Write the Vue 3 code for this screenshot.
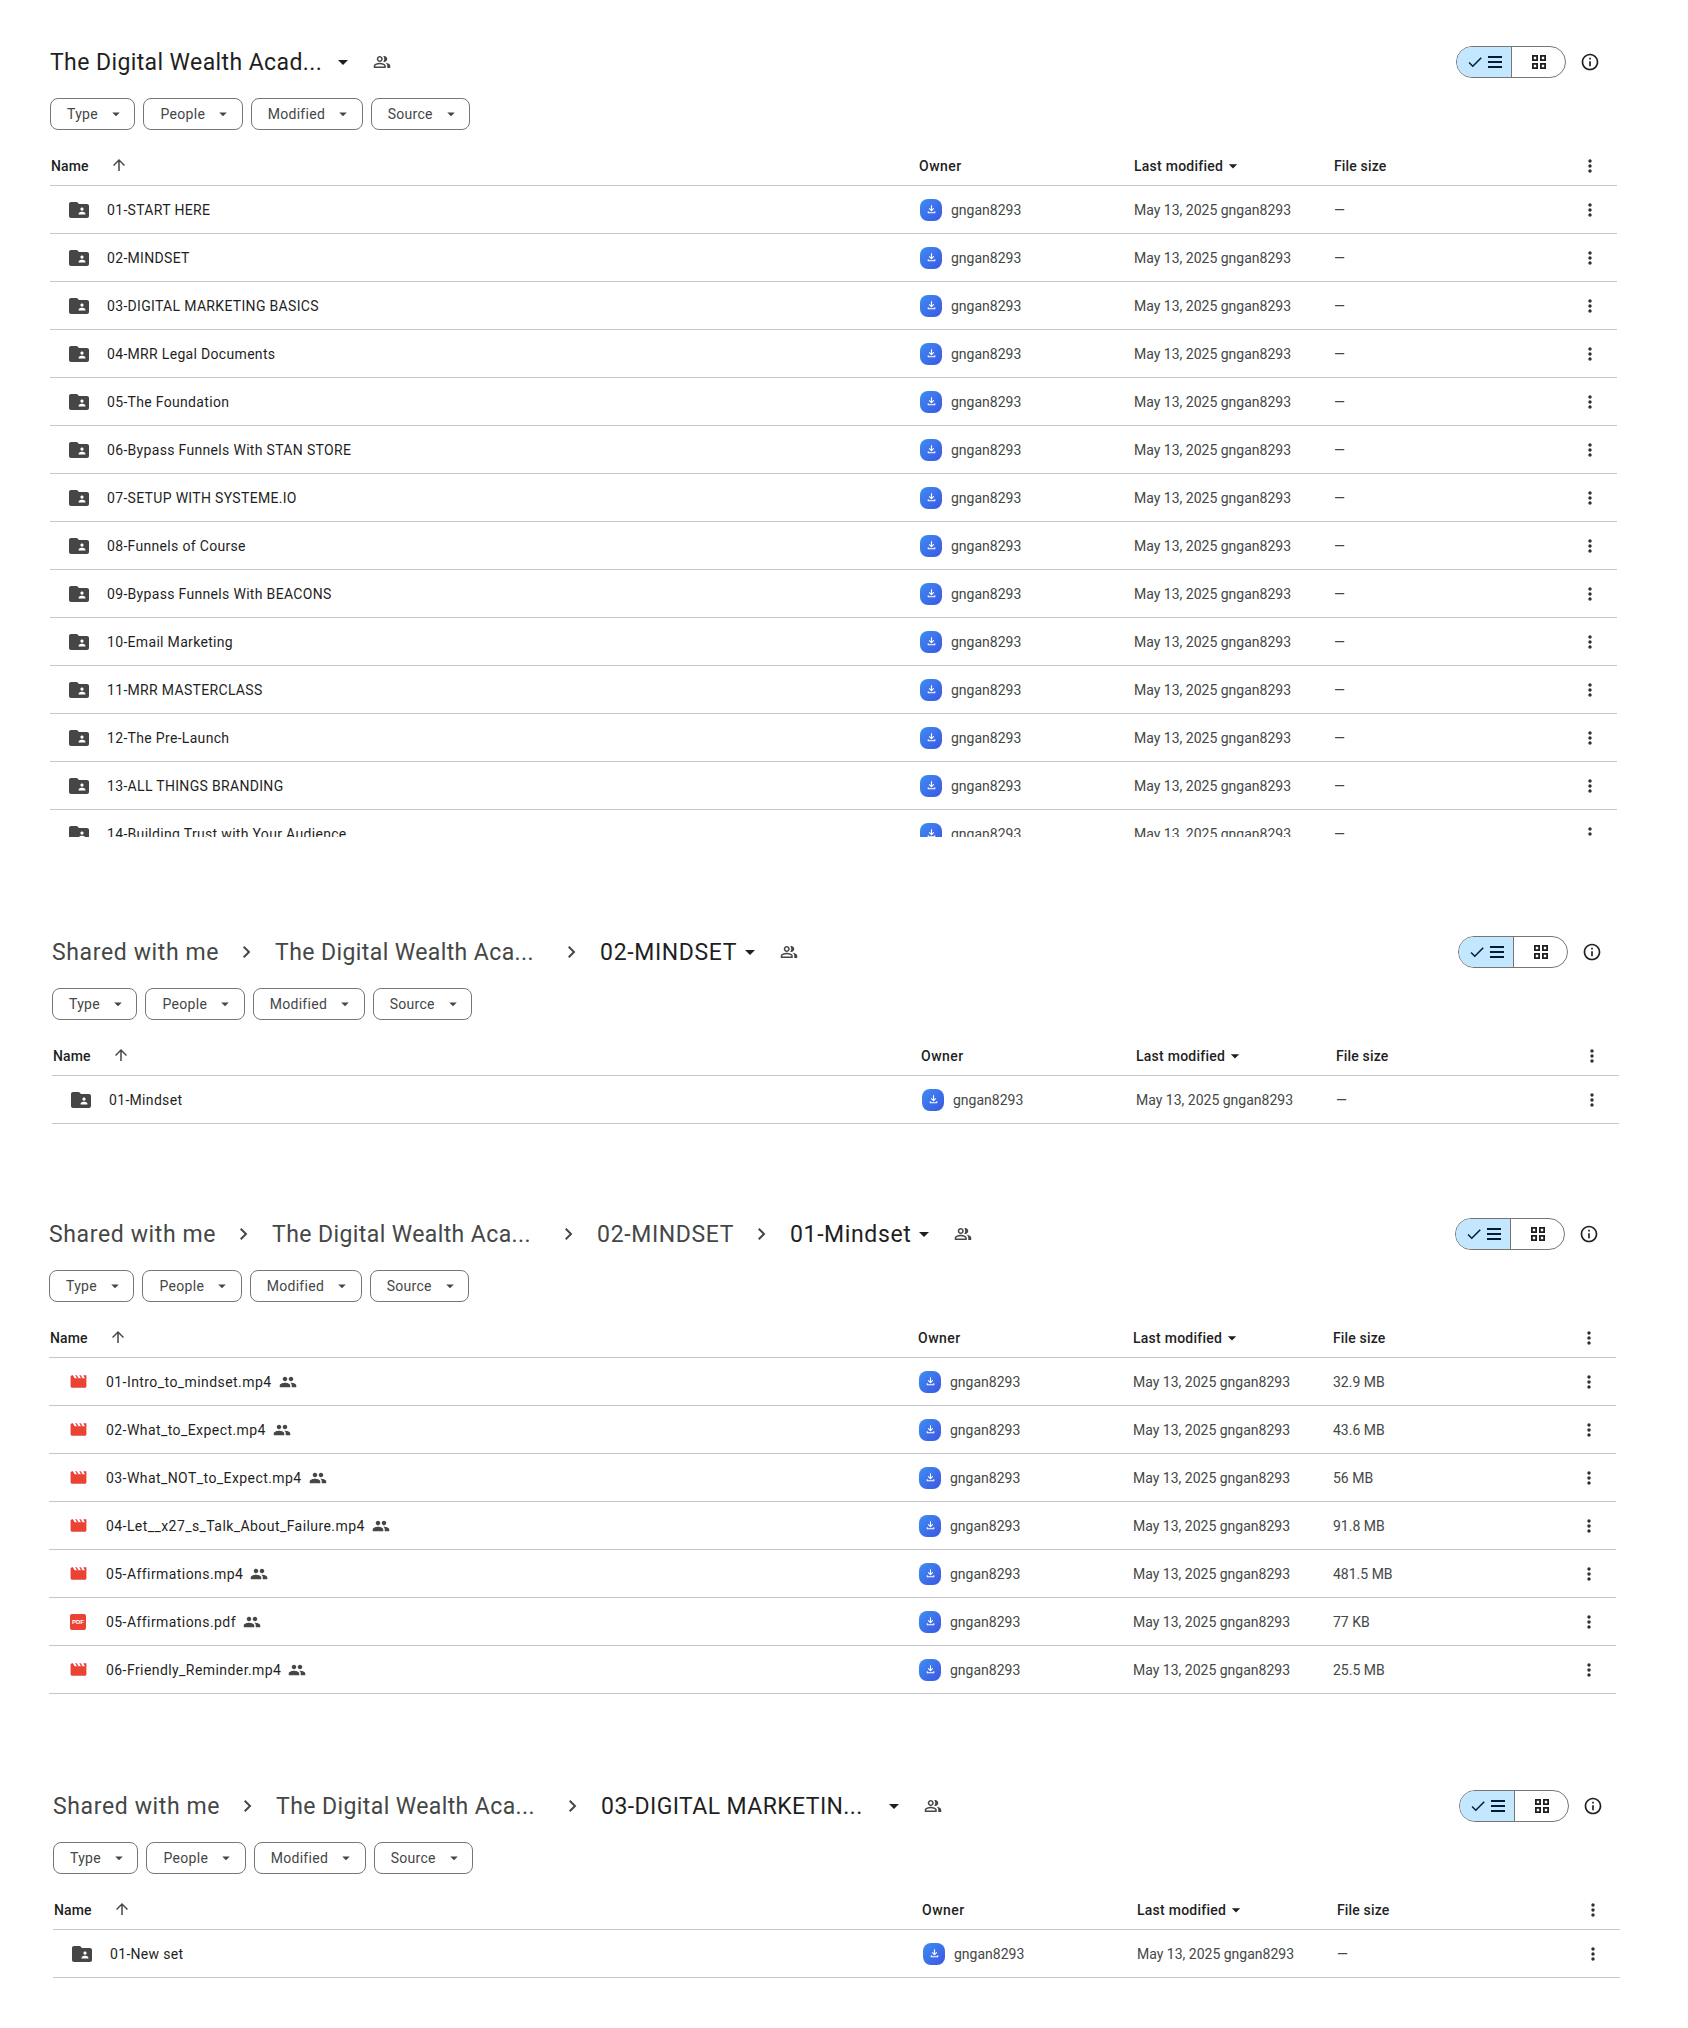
<script setup>
const caret = 'M7 10l5 5 5-5z'
const folderRows = ['01-START HERE','02-MINDSET','03-DIGITAL MARKETING BASICS','04-MRR Legal Documents','05-The Foundation','06-Bypass Funnels With STAN STORE','07-SETUP WITH SYSTEME.IO','08-Funnels of Course','09-Bypass Funnels With BEACONS','10-Email Marketing','11-MRR MASTERCLASS','12-The Pre-Launch','13-ALL THINGS BRANDING','14-Building Trust with Your Audience'].map(n => ({ name: n, kind: 'folder', size: '—' }))
const panels = [
  { id: 'root', crumbs: [{ t: 'The Digital Wealth Acad...', w: 280, last: true }], clip: true, rows: folderRows },
  { id: 'mindset', crumbs: [{ t: 'Shared with me' }, { t: 'The Digital Wealth Aca...', w: 269 }, { t: '02-MINDSET', last: true }], rows: [{ name: '01-Mindset', kind: 'folder', size: '—' }] },
  { id: 'files', crumbs: [{ t: 'Shared with me' }, { t: 'The Digital Wealth Aca...', w: 269 }, { t: '02-MINDSET' }, { t: '01-Mindset', last: true }], rows: [
    { name: '01-Intro_to_mindset.mp4', kind: 'video', size: '32.9 MB', shared: true },
    { name: '02-What_to_Expect.mp4', kind: 'video', size: '43.6 MB', shared: true },
    { name: '03-What_NOT_to_Expect.mp4', kind: 'video', size: '56 MB', shared: true },
    { name: '04-Let__x27_s_Talk_About_Failure.mp4', kind: 'video', size: '91.8 MB', shared: true },
    { name: '05-Affirmations.mp4', kind: 'video', size: '481.5 MB', shared: true },
    { name: '05-Affirmations.pdf', kind: 'pdf', size: '77 KB', shared: true },
    { name: '06-Friendly_Reminder.mp4', kind: 'video', size: '25.5 MB', shared: true }
  ] },
  { id: 'digital', crumbs: [{ t: 'Shared with me' }, { t: 'The Digital Wealth Aca...', w: 269 }, { t: '03-DIGITAL MARKETIN...', w: 280, last: true }], rows: [{ name: '01-New set', kind: 'folder', size: '—' }] }
]
const filters = ['Type', 'People', 'Modified', 'Source']
</script>

<template>
  <div class="page">
    <section v-for="p in panels" :key="p.id" class="panel" :class="'panel-' + p.id">
      <header class="top">
        <div class="crumbs">
          <template v-for="(c, i) in p.crumbs" :key="i">
            <span class="crumb" :class="{ last: c.last, fixed: c.w }" :style="c.w ? { width: c.w + 'px' } : null">{{ c.t }}</span>
            <svg v-if="!c.last" class="chev" viewBox="0 0 24 24"><path d="M9.4 6 8 7.4 12.6 12 8 16.6 9.4 18l6-6z" /></svg>
          </template>
          <svg class="title-caret" viewBox="0 0 24 24"><path :d="caret" /></svg>
          <svg class="people-out" viewBox="0 0 24 24"><path d="M16.67 13.13C18.04 14.06 19 15.32 19 17v3h4v-3c0-2.18-3.57-3.47-6.33-3.87zM15 12c2.21 0 4-1.79 4-4s-1.79-4-4-4c-.47 0-.91.1-1.33.24C14.5 5.27 15 6.58 15 8s-.5 2.73-1.33 3.76c.42.14.86.24 1.33.24zM9 12c2.21 0 4-1.79 4-4s-1.79-4-4-4-4 1.790-4 4 1.790 4 4 4zm0-6c1.100 0 2 .9 2 2s-.9 2-2 2-2-.9-2-2 .9-2 2-2zM9 13c-2.670 0-8 1.340-8 4v3h16v-3c0-2.660-5.330-4-8-4zm6 5H3v-.99C3.200 16.290 6.300 15 9 15s5.800 1.290 6 2z" /></svg>
          <span class="spacer"></span>
          <div class="toggle">
            <span class="seg on">
              <svg class="check" viewBox="0 0 24 24"><path d="M9 16.200 4.800 12l-1.400 1.400L9 19 21 7l-1.400-1.400z" /></svg>
              <svg class="lines" viewBox="0 0 14 12"><path d="M0 0h14v2H0zM0 5h14v2H0zM0 10h14v2H0z" /></svg>
            </span>
            <span class="seg">
              <svg class="grid-ic" viewBox="0 0 16 16"><path fill-rule="evenodd" d="M1 1h6v6H1zM2.800 2.800v2.400h2.400V2.800zM9 1h6v6H9zM10.800 2.800v2.400h2.400V2.800zM1 9h6v6H1zM2.800 10.800v2.400h2.400v-2.400zM9 9h6v6H9zM10.800 10.800v2.400h2.400v-2.400z" /></svg>
            </span>
          </div>
          <span class="info-wrap">
            <svg class="info" viewBox="0 0 24 24"><path d="M11 7h2v2h-2zm0 4h2v6h-2zm1-9C6.480 2 2 6.480 2 12s4.480 10 10 10 10-4.480 10-10S17.520 2 12 2zm0 18c-4.410 0-8-3.590-8-8s3.590-8 8-8 8 3.590 8 8-3.590 8-8 8z" /></svg>
          </span>
        </div>
      </header>

      <div class="chips">
        <button v-for="f in filters" :key="f" class="chip">
          <span>{{ f }}</span>
          <svg viewBox="0 0 24 24"><path :d="caret" /></svg>
        </button>
      </div>

      <div class="grid head">
        <div class="name-head">
          <span>Name</span>
          <svg class="arrow" viewBox="0 0 24 24"><path d="M4 12l1.410 1.410L11 7.830V20h2V7.830l5.580 5.590L20 12l-8-8z" /></svg>
        </div>
        <div class="owner-head">Owner</div>
        <div class="mod-head">Last modified<svg viewBox="0 0 24 24"><path :d="caret" /></svg></div>
        <div>File size</div>
        <div class="more"><svg viewBox="0 0 24 24"><path d="M12 8c1.100 0 2-.9 2-2s-.9-2-2-2-2 .9-2 2 .9 2 2 2zm0 2c-1.100 0-2 .9-2 2s.9 2 2 2 2-.9 2-2-.9-2-2-2zm0 6c-1.100 0-2 .9-2 2s.9 2 2 2 2-.9 2-2-.9-2-2-2z" /></svg></div>
      </div>

      <div class="list" :class="{ clipped: p.clip }">
        <div v-for="r in p.rows" :key="r.name" class="grid row">
          <div class="name-cell">
            <span class="type-slot">
              <svg v-if="r.kind === 'folder'" class="folder" viewBox="0 0 24 24"><path d="M20 6h-8l-2-2H4c-1.100 0-1.990.9-1.990 2L2 18c0 1.100.9 2 2 2h16c1.100 0 2-.9 2-2V8c0-1.100-.9-2-2-2zm-5 3.500c.9 0 1.600.7 1.600 1.600s-.7 1.600-1.600 1.600-1.600-.7-1.600-1.600.7-1.600 1.600-1.600zm3.400 7h-6.800v-.9c0-1.200 2.300-1.800 3.400-1.800s3.400.6 3.400 1.800z" /></svg>
              <svg v-else-if="r.kind === 'video'" class="video" viewBox="0 0 24 24"><path d="M18 4l2 4h-3l-2-4h-2l2 4h-3l-2-4H8l2 4H7L5 4H4c-1.100 0-1.990.9-1.990 2L2 18c0 1.100.9 2 2 2h16c1.100 0 2-.9 2-2V4h-4z" /></svg>
              <span v-else class="pdf">PDF</span>
            </span>
            <span class="fname" :class="{ wide: r.shared }">{{ r.name }}</span>
            <svg v-if="r.shared" class="shared" viewBox="0 0 24 24"><path d="M16 11c1.660 0 2.990-1.340 2.990-3S17.660 5 16 5c-1.660 0-3 1.340-3 3s1.340 3 3 3zm-8 0c1.660 0 2.990-1.340 2.990-3S9.660 5 8 5C6.340 5 5 6.340 5 8s1.340 3 3 3zm0 2c-2.330 0-7 1.170-7 3.500V19h14v-2.500c0-2.330-4.670-3.500-7-3.500zm8 0c-.29 0-.62.02-.97.05 1.160.84 1.970 1.970 1.970 3.450V19h6v-2.500c0-2.330-4.670-3.500-7-3.500z" /></svg>
          </div>
          <div class="owner">
            <span class="avatar"><svg viewBox="0 0 24 24"><path d="M12 15.500 7 10.500l1.400-1.400 2.600 2.500V4h2v7.600l2.600-2.500 1.400 1.400zM5 19v-4h2v2h10v-2h2v4z" /></svg></span>
            <span>gngan8293</span>
          </div>
          <div class="muted">May 13, 2025 gngan8293</div>
          <div class="muted">{{ r.size }}</div>
          <div class="more"><svg viewBox="0 0 24 24"><path d="M12 8c1.100 0 2-.9 2-2s-.9-2-2-2-2 .9-2 2 .9 2 2 2zm0 2c-1.100 0-2 .9-2 2s.9 2 2 2 2-.9 2-2-.9-2-2-2zm0 6c-1.100 0-2 .9-2 2s.9 2 2 2 2-.9 2-2-.9-2-2-2z" /></svg></div>
        </div>
      </div>
    </section>
  </div>
</template>

<style>
html, body { background: #fff; }
</style>

<style scoped>
.page { width: 1688px; height: 2028px; overflow: hidden; font-family: Roboto, "Liberation Sans", sans-serif; color: #1f1f1f; }
.panel { width: 1567px; }
.panel-root { padding: 40px 0 0 50px; }
.panel-mindset { margin: 93px 0 0 52px; }
.panel-files { margin: 88px 0 0 49px; }
.panel-digital { margin: 90px 0 0 53px; }

.crumbs { height: 44px; display: flex; align-items: center; }
.crumb { font-size: 23px; color: #444746; white-space: nowrap; letter-spacing: .62px; }
.crumb.fixed { letter-spacing: .4px; }
.crumb.last { color: #1f1f1f; }
.chev { width: 24px; height: 24px; margin: 0 16px; fill: #444746; }
.title-caret { width: 24px; height: 24px; margin-left: 1px; fill: #1f1f1f; }
.people-out { width: 18px; height: 18px; margin-left: 18px; fill: #444746; }
.spacer { flex: 1; }
.toggle { width: 110px; height: 32px; box-sizing: border-box; border: 1px solid #747775; border-radius: 16px; display: flex; overflow: hidden; }
.seg { flex: 1; display: flex; align-items: center; justify-content: center; gap: 4px; }
.seg.on { flex: 0 0 55px; background: #c2e7ff; border-right: 1px solid #747775; box-sizing: border-box; }
.check { width: 18px; height: 18px; fill: #001d35; }
.lines { width: 14px; height: 12px; fill: #001d35; }
.grid-ic { width: 16px; height: 16px; fill: #1f1f1f; }
.info-wrap { width: 51px; box-sizing: border-box; padding-right: 3px; display: flex; justify-content: center; }
.info { width: 20px; height: 20px; fill: #1f1f1f; }

.chips { display: flex; gap: 8px; margin-top: 14px; }
.chip { height: 32px; box-sizing: border-box; border: 1px solid #747775; border-radius: 8px; background: #fff; padding: 0 9.500px 0 16px; display: flex; align-items: center; gap: 9px; font: 14px Roboto, sans-serif; letter-spacing: .3px; color: #444746; }
.chip svg { width: 18px; height: 18px; fill: #444746; }

.grid { display: grid; grid-template-columns: 869px 215px 200px 229px 54px; align-items: center; }
.head { height: 38px; margin-top: 17px; border-bottom: 1px solid #c7c7c7; font-size: 14px; letter-spacing: .15px; color: #1f1f1f; font-weight: 500; }
.owner-head { letter-spacing: .5px; }
.name-head { display: flex; align-items: center; padding-left: 1px; }
.arrow { width: 18px; height: 18px; margin-left: 21px; fill: #444746; margin-top: -3px; }
.mod-head { display: flex; align-items: center; letter-spacing: .25px; }
.mod-head svg { width: 20px; height: 20px; fill: #1f1f1f; margin-left: 0; }
.more { display: flex; justify-content: center; }
.more svg { width: 20px; height: 20px; fill: #303030; }

.list.clipped { height: 651px; overflow: hidden; }
.row { height: 47px; border-bottom: 1px solid #c7c7c7; font-size: 14px; }
.name-cell { display: flex; align-items: center; min-width: 0; }
.type-slot { width: 57px; flex: none; display: flex; justify-content: center; padding-left: 1px; box-sizing: border-box; }
.folder { width: 24px; height: 24px; fill: #444746; }
.video { width: 19px; height: 19px; fill: #ea4335; }
.pdf { width: 16px; height: 16px; border-radius: 2px; background: #ea4335; color: #fff; font: 700 6px/16px "Liberation Sans", sans-serif; text-align: center; }
.fname { color: #1f1f1f; letter-spacing: .32px; }
.fname.wide { letter-spacing: .43px; }
.shared { width: 18px; height: 18px; margin-left: 7px; fill: #444746; }
.owner { display: flex; align-items: center; gap: 9px; color: #444746; }
.avatar { width: 22px; height: 22px; border-radius: 8px; background: linear-gradient(135deg, #3f8cf3, #3b57e0); display: flex; align-items: center; justify-content: center; margin-left: 1px; }
.avatar svg { width: 13px; height: 13px; fill: #fff; }
.muted { color: #444746; }
</style>
